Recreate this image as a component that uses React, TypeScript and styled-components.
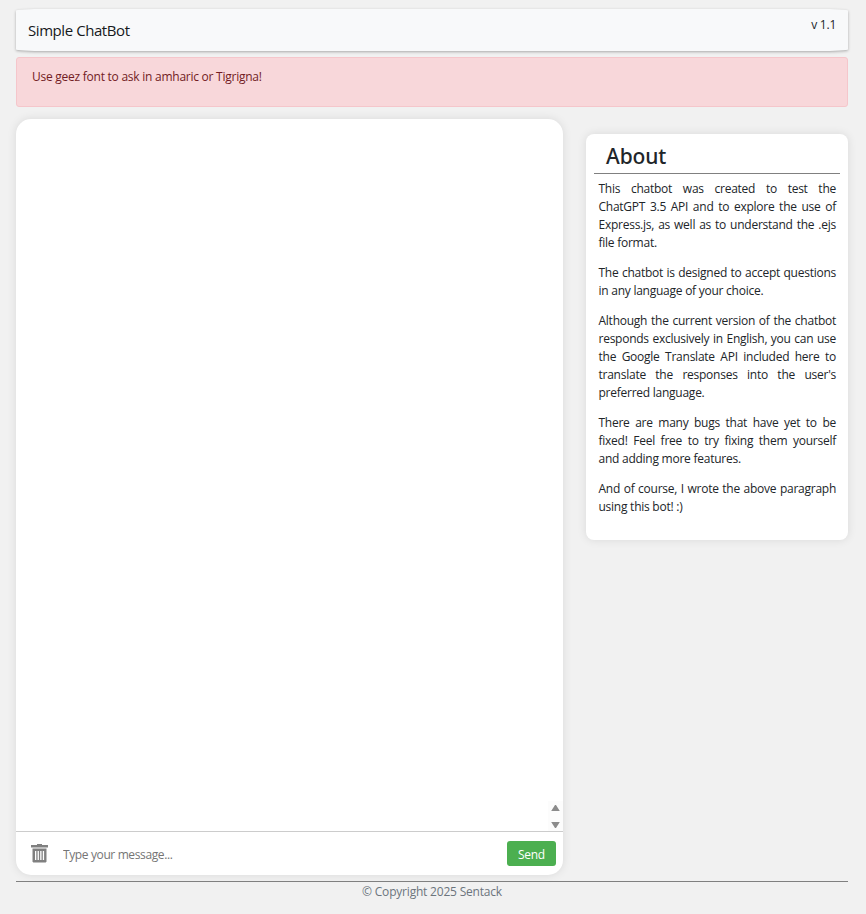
import React from 'react';
import styled, { createGlobalStyle } from 'styled-components';

const GlobalStyle = createGlobalStyle`
  *, *::before, *::after { box-sizing: border-box; }
  body {
    margin: 0;
    background: #f1f1f1;
    color: #212529;
    font: 12px/18px "Segoe UI", "Open Sans", "Noto Sans", sans-serif;
    letter-spacing: -0.25px;
    overflow: hidden;
  }
`;

const Page = styled.div`
  height: 914px;
  padding: 9px 18px 0 16px;
  display: flex;
  flex-direction: column;
`;

const Header = styled.header`
  height: 42px;
  flex: none;
  display: flex;
  justify-content: space-between;
  padding: 7px 12px 0;
  background: #f8f9fa;
  border-radius: 30px / 1.5px;
  box-shadow: 0 1px 3px rgba(0, 0, 0, 0.3);
`;

const Brand = styled.span`
  font-size: 15px;
  line-height: 28px;
  letter-spacing: -0.43px;
  color: #16191c;
`;

const Version = styled.span`
  letter-spacing: -0.25px;
`;

const Alert = styled.div`
  height: 50px;
  flex: none;
  margin-top: 6px;
  padding: 10px 15px;
  color: #721c24;
  background: #f8d7da;
  border: 1px solid #f5c6cb;
  border-radius: 3px;
`;

const Main = styled.main`
  display: flex;
  align-items: flex-start;
  justify-content: space-between;
  margin-top: 12px;
`;

const Chat = styled.section`
  width: 547px;
  height: 756px;
  display: flex;
  flex-direction: column;
  overflow: hidden;
  background: #fff;
  border-radius: 15px;
  box-shadow: 0 0 10px rgba(0, 0, 0, 0.1);
`;

const Messages = styled.div`
  flex: 1;
  display: flex;
  align-items: flex-end;
  justify-content: flex-end;
`;

const Scroller = styled.svg`
  display: block;
  width: 15px;
  height: 30px;
  background: #fcfcfc;
  fill: #8b8b8b;
`;

const Composer = styled.div`
  height: 44px;
  display: flex;
  align-items: center;
  padding: 0 7px 0 15px;
  border-top: 1px solid #ccc;
`;

const Trash = styled.svg`
  width: 17px;
  height: 19px;
  margin-top: -1px;
  fill: #808080;
`;

const MessageInput = styled.input`
  flex: 1;
  min-width: 0;
  height: 30px;
  margin: 1px 0 0 15px;
  padding: 0;
  border: 0;
  outline: 0;
  font: inherit;
  letter-spacing: -0.38px;
  background: transparent;
  &::placeholder { color: #757575; opacity: 1; }
`;

const SendButton = styled.button`
  width: 49px;
  height: 25px;
  padding: 3px 0 0;
  border: 0;
  border-radius: 3px;
  font: inherit;
  letter-spacing: -0.3px;
  color: #fff;
  background: #4caf50;
`;

const About = styled.aside`
  width: 262px;
  height: 406px;
  margin-top: 15px;
  padding: 8px;
  background: #fff;
  border-radius: 8px;
  box-shadow: 0 0 10px rgba(0, 0, 0, 0.1);
`;

const AboutTitle = styled.h2`
  height: 32px;
  margin: 0;
  padding-left: 12px;
  font-family: "Segoe UI", "Noto Sans", sans-serif;
  font-size: 21px;
  line-height: 28px;
  font-weight: 500;
  letter-spacing: -0.1px;
  border-bottom: 1px solid #808080;
`;

const AboutText = styled.div`
  padding: 6px 4px 0 4.5px;
  text-align: justify;
`;

const Paragraph = styled.p`
  margin: 0 0 12px;
`;

const Footer = styled.footer`
  margin-top: 6px;
  padding-top: 1px;
  border-top: 1px solid #808080;
  text-align: center;
  letter-spacing: -0.2px;
  color: #6c757d;
`;

const paragraphs = [
  'This chatbot was created to test the ChatGPT 3.5 API and to explore the use of Express.js, as well as to understand the .ejs file format.',
  'The chatbot is designed to accept questions in any language of your choice.',
  "Although the current version of the chatbot responds exclusively in English, you can use the Google Translate API included here to translate the responses into the user's preferred language.",
  'There are many bugs that have yet to be fixed! Feel free to try fixing them yourself and adding more features.',
  'And of course, I wrote the above paragraph using this bot! :)',
];

export default function App() {
  return (
    <>
      <GlobalStyle />
      <Page>
        <Header>
          <Brand>Simple ChatBot</Brand>
          <Version>v 1.1</Version>
        </Header>
        <Alert>Use geez font to ask in amharic or Tigrigna!</Alert>
        <Main>
          <Chat>
            <Messages>
              <Scroller viewBox="0 0 15 30">
                <path d="M3.200 10 7 4h1l3.800 6zM3.200 21h8.600L8 27H7z" />
              </Scroller>
            </Messages>
            <Composer>
              <Trash viewBox="0 0 17 19">
                <path d="M6 0h5v1H17v2.500H0V1h6z" />
                <path fillRule="evenodd" d="M1.500 4.500h14v13.200l-.8.800H2.300l-.8-.8zM4 7v9h1.300V7zm2.600 0v9h1.300V7zm2.600 0v9h1.300V7zm2.600 0v9h1.300V7z" />
              </Trash>
              <MessageInput placeholder="Type your message..." />
              <SendButton>Send</SendButton>
            </Composer>
          </Chat>
          <About>
            <AboutTitle>About</AboutTitle>
            <AboutText>
              {paragraphs.map((text) => (
                <Paragraph key={text}>{text}</Paragraph>
              ))}
            </AboutText>
          </About>
        </Main>
        <Footer>© Copyright 2025 Sentack</Footer>
      </Page>
    </>
  );
}
